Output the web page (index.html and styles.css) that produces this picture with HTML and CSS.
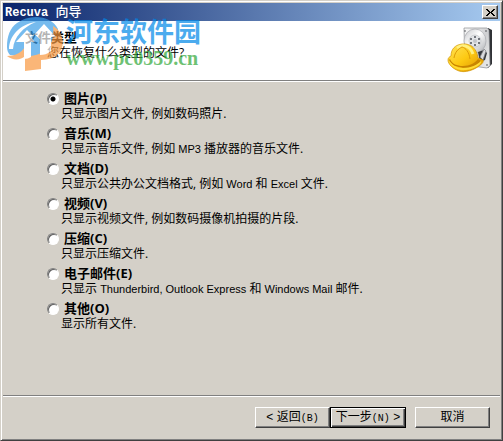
FILE: index.html
```html
<!DOCTYPE html>
<html lang="zh-CN">
<head>
<meta charset="utf-8">
<title>Recuva 向导</title>
<link rel="stylesheet" href="styles.css">
</head>
<body>
<form class="window">
  <div class="titlebar">
    <h1 class="caption"><span class="caption-latin">Recuva </span>向导</h1>
    <button class="close" type="button" aria-label="关闭">
      <svg width="9" height="7" viewBox="0 0 9 7" shape-rendering="crispEdges"><path fill="#000" d="M0 0h2v1h1v1h1v1h1V2h1V1h1V0h2v1H8v1H7v1H6v1h1v1h1v1h1v1H7V6H6V5H5V4H4v1H3v1H2v1H0V6h1V5h1V4h1V3H2V2H1V1H0z"/></svg>
    </button>
  </div>
  <header class="header">
    <div>
      <h2 class="heading">文件类型</h2>
      <p class="question">您在恢复什么类型的文件?</p>
    </div>
    <svg class="drive" width="48" height="48" viewBox="0 0 48 48" aria-hidden="true">
      <defs>
        <linearGradient id="plate" x1="0" y1="0" x2="1" y2="1"><stop offset="0" stop-color="#fafafa"/><stop offset=".5" stop-color="#cfd0d2"/><stop offset="1" stop-color="#eceded"/></linearGradient>
        <linearGradient id="disc" x1="0" y1="0" x2="1" y2="1"><stop offset="0" stop-color="#c4c6ca"/><stop offset=".45" stop-color="#fff"/><stop offset="1" stop-color="#a9acb0"/></linearGradient>
        <linearGradient id="helmet" x1="0" y1="0" x2="1" y2="1"><stop offset="0" stop-color="#ffe45c"/><stop offset=".5" stop-color="#fdc912"/><stop offset="1" stop-color="#d98c00"/></linearGradient>
      </defs>
      <path fill="#303236" d="M41 1l4 2v34l-4 4-4-4z"/>
      <path fill="url(#plate)" stroke="#898c90" stroke-width=".7" d="M17 1h23l2 2 1 36-3 2-22-3z"/>
      <ellipse cx="28" cy="14" rx="11" ry="12" fill="url(#disc)" stroke="#a7a9ad" stroke-width=".7"/>
      <circle cx="28" cy="14" r="6" fill="#e3e5e8" stroke="#bfc1c4" stroke-width=".7"/>
      <circle cx="28" cy="14" r="2" fill="#c3c6cb"/>
      <g fill="#4d5158"><circle cx="28" cy="10" r="1"/><circle cx="32" cy="12" r="1"/><circle cx="32" cy="16" r="1"/><circle cx="28" cy="18" r="1"/><circle cx="24" cy="16" r="1"/><circle cx="24" cy="12" r="1"/></g>
      <path fill="#34373b" d="M31 25l6-2 3 3-2 7-5 2z"/>
      <path fill="#d9dadd" stroke="#7b7d80" stroke-width=".7" d="M37 22l2 2-3 9-3-3z"/>
      <g fill="#44474b"><circle cx="18" cy="4" r=".8"/><circle cx="39" cy="4" r=".8"/><circle cx="40" cy="38" r=".8"/></g>
      <path fill="url(#helmet)" stroke="#d19300" stroke-width=".7" d="M4 29c0-7 4-11 11-12 9-1 15 5 16 14l5 2c1 2-1 4-4 6-5 4-14 7-20 5C6 42 1 37 1 33c0-2 1-3 3-4z"/>
      <path fill="#c98500" d="M3 32c2 5 7 7 13 7 7 0 12-3 15-7l3 2c-5 7-14 8-22 6C7 39 3 37 2 33z"/>
      <path fill="#ffdc35" d="M2 33c3 5 7 8 14 8 8 0 14-3 18-7 2 2-5 8-15 9C10 44 2 39 2 33z"/>
      <path fill="none" stroke="#fff07f" stroke-width="3" d="M10 21c5-4 13-3 16 6"/>
      <path fill="none" stroke="#dc9a05" d="M7 31c1-6 4-9 8-11 4 1 7 5 8 12"/>
    </svg>
  </header>
  <main class="options" role="radiogroup" aria-label="文件类型">
    <div class="option"><input type="radio" name="type" id="t1" checked aria-describedby="d1"><label for="t1">图片(P)</label><p id="d1">只显示图片文件, 例如数码照片.</p></div>
    <div class="option"><input type="radio" name="type" id="t2" aria-describedby="d2"><label for="t2">音乐(M)</label><p id="d2">只显示音乐文件, 例如 <span class="latin">MP3</span> 播放器的音乐文件.</p></div>
    <div class="option"><input type="radio" name="type" id="t3" aria-describedby="d3"><label for="t3">文档(D)</label><p id="d3">只显示公共办公文档格式, 例如 <span class="latin">Word</span> 和 <span class="latin">Excel</span> 文件.</p></div>
    <div class="option"><input type="radio" name="type" id="t4" aria-describedby="d4"><label for="t4">视频(V)</label><p id="d4">只显示视频文件, 例如数码摄像机拍摄的片段.</p></div>
    <div class="option"><input type="radio" name="type" id="t5" aria-describedby="d5"><label for="t5">压缩(C)</label><p id="d5">只显示压缩文件.</p></div>
    <div class="option"><input type="radio" name="type" id="t6" aria-describedby="d6"><label for="t6">电子邮件(E)</label><p id="d6">只显示 <span class="latin">Thunderbird, Outlook Express</span> 和 <span class="latin">Windows Mail</span> 邮件.</p></div>
    <div class="option"><input type="radio" name="type" id="t7" aria-describedby="d7"><label for="t7">其他(O)</label><p id="d7">显示所有文件.</p></div>
  </main>
  <footer class="footer">
    <button class="button" type="button">&lt; 返回<span class="mono">(B)</span></button>
    <button class="button default" type="submit">下一步<span class="mono">(N)</span> &gt;</button>
    <button class="button cancel" type="button">取消</button>
  </footer>
  <div class="watermark">
    <svg width="62" height="56" viewBox="0 0 62 56" aria-hidden="true">
      <path fill="#3d9fe8" d="M3 31C3 20 6 12 13 7 22 0 36-1 45 4c4 2 7 5 9 9v24c-8 5-20 6-31 4L6 39c-2-2-3-5-3-8z"/>
      <path fill="#fff" d="M5 33C5 21 15 8 32 6 19 11 10 21 9 33z"/>
      <path fill="#f8983f" d="M49 10c15 8 14 34-12 34v9l-16 2V40c14 1 31-6 28-30z"/>
      <path fill="#f8983f" d="M3 40c8 0 14-3 18-9v9c-4 4-12 5-18 0z"/>
      <path fill="#fff" d="M12 26l11-12 6 6 11-12 12 13h-5v14c-4 3-7 4-11 4V23l-6-5-3 3 4 5h-4v15c-2 1-4 2-7 2V26z"/>
    </svg>
    <div class="brand">
      <div class="brand-name">河东软件园</div>
      <div class="brand-url">www.pc0359.cn</div>
    </div>
  </div>
</form>
</body>
</html>
```
FILE: styles.css
```css
* {
  box-sizing: border-box;
}

body {
  margin: 0;
  background: #d4d0c8;
  color: #000;
  font: 12px/15px "Open Sans", "Noto Sans CJK SC", sans-serif;
}

h1, h2, p {
  margin: 0;
  font-size: 12px;
}

.window {
  position: relative;
  display: flex;
  flex-direction: column;
  min-height: 100vh;
  padding: 1px;
  border: 1px solid #d4d0c8;
  border-right-color: #404040;
  border-bottom-color: #404040;
  box-shadow: inset 1px 1px #fff, inset -1px -1px #808080;
}

.titlebar {
  display: flex;
  align-items: center;
  justify-content: space-between;
  height: 18px;
  margin: 1px 1px 0;
  padding: 0 2px;
  background: linear-gradient(90deg, #0a246a, #a6caf0);
  color: #fff;
}

.caption {
  font: 500 13px/15px "Noto Sans CJK SC", sans-serif;
}

.caption-latin {
  font: bold 12px/15px "Liberation Mono", monospace;
}

.close {
  display: flex;
  align-items: center;
  justify-content: center;
  width: 16px;
  height: 14px;
  padding: 0;
  border: 1px solid;
  border-color: #fff #404040 #404040 #fff;
  background: #d4d0c8;
  box-shadow: inset -1px -1px #808080;
}

.header {
  display: flex;
  justify-content: space-between;
  height: 60px;
  margin: 0 1px;
  padding: 6px 5px 0 22px;
  border-bottom: 1px solid #808080;
  box-shadow: 0 1px #fff;
  background: #fff;
}

.heading {
  margin: 3px 0 0;
  font: bold 13px/15px "Open Sans", "Noto Sans CJK SC", sans-serif;
}

.question {
  padding-left: 22px;
}

.options {
  flex: 1;
  padding: 10px 45px;
}

.option {
  display: grid;
  grid-template-columns: 14px 3px 1fr;
  height: 35px;
  grid-template-rows: 15px 15px;
  align-items: center;
}

.option input {
  appearance: none;
  width: 12px;
  height: 12px;
  margin: 0;
  border: 1px solid;
  border-color: #808080 #fff #fff #808080;
  border-radius: 50%;
  background: #fff;
  box-shadow: inset 1px 1px #606060;
}

.option input:checked {
  background: radial-gradient(circle, #000 2px, #fff 3px);
}

.option label {
  grid-column: 3;
  font: bold 13px/15px "Open Sans", "Noto Sans CJK SC", sans-serif;
}

.option p {
  grid-column: 2 / 4;
  grid-row: 2;
}

.latin {
  font: 11px/15px "Liberation Sans", sans-serif;
}

.footer {
  display: flex;
  justify-content: flex-end;
  margin: 0 1px;
  padding: 11px 10px;
  border-top: 1px solid #808080;
  box-shadow: inset 0 1px #fff;
}

.button {
  width: 75px;
  height: 21px;
  padding: 0;
  border: 1px solid;
  border-color: #fff #404040 #404040 #fff;
  background: #d4d0c8;
  box-shadow: inset -1px -1px #808080;
  color: #000;
  font: 12px/15px "Liberation Sans", "Noto Sans CJK SC", sans-serif;
  white-space: nowrap;
}

.default {
  width: 76px;
  border-color: #000;
  box-shadow: inset 1px 1px #fff, inset -1px -1px #404040, inset -2px -2px #808080;
}

.cancel {
  margin-left: 9px;
}

.mono {
  font: 10px/15px "Liberation Mono", monospace;
}

.watermark {
  position: absolute;
  top: 15px;
  left: 3px;
  display: flex;
  opacity: 0.7;
  pointer-events: none;
}

.brand {
  white-space: nowrap;
}

.brand-name {
  color: #0088e8;
  font: bold 27px/29px "Noto Sans CJK SC", sans-serif;
}

.brand-url {
  color: #30a838;
  font: bold 20px/26px "Liberation Serif", serif;
}
```
